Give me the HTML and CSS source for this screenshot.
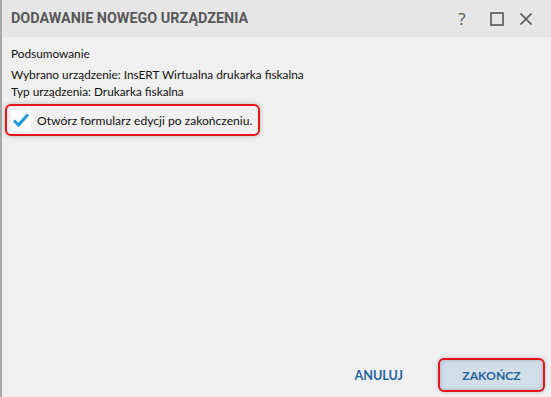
FILE: index.html
```html
<!DOCTYPE html>
<html lang="pl">
<head>
<meta charset="utf-8">
<link rel="stylesheet" href="styles.css">
</head>
<body>
<div class="window">
  <header class="titlebar">
    <h1 class="title">DODAWANIE NOWEGO URZĄDZENIA</h1>
    <div class="controls">
      <span class="ctrl help">?</span>
      <span class="ctrl max">
        <svg width="14" height="14" viewBox="0 0 14 14"><rect x="1" y="1" width="12" height="12" fill="none" stroke="#555" stroke-width="1.6"/></svg>
      </span>
      <span class="ctrl">
        <svg width="14" height="14" viewBox="0 0 14 14"><path d="M1.5 1.5 L12.5 12.5 M12.5 1.5 L1.5 12.5" stroke="#555" stroke-width="1.7" fill="none"/></svg>
      </span>
    </div>
  </header>
  <main class="content">
    <p class="line heading">Podsumowanie</p>
    <p class="line first">Wybrano urządzenie: InsERT Wirtualna drukarka fiskalna</p>
    <p class="line">Typ urządzenia: Drukarka fiskalna</p>
    <div class="check-row">
      <span class="checkbox">
        <svg width="18" height="16" viewBox="0 0 18 16"><path d="M2 8.5 L6.5 13 L16 2.5" fill="none" stroke="#1a9bd7" stroke-width="3"/></svg>
      </span>
      <span class="check-label">Otwórz formularz edycji po zakończeniu.</span>
    </div>
  </main>
  <footer class="footer">
    <button class="btn link">ANULUJ</button>
    <button class="btn primary">ZAKOŃCZ</button>
  </footer>
</div>
</body>
</html>
```
FILE: styles.css
```css
html, body {
  margin: 0;
  padding: 0;
}
body {
  width: 551px;
  height: 397px;
  overflow: hidden;
  background: #f0f0f0;
  font-family: "Lato", "Open Sans", sans-serif;
}
.window {
  width: 551px;
  height: 397px;
  display: flex;
  flex-direction: column;
  box-sizing: border-box;
  border-left: 2px solid #a8a8a8;
  background: #f0f0f0;
}
.titlebar {
  height: 37px;
  background: #e6e6e6;
  display: flex;
  align-items: center;
  justify-content: space-between;
  padding-left: 9px;
  flex: none;
}
.title {
  margin: 0;
  font-family: "Roboto", sans-serif;
  font-size: 14.4px;
  font-weight: 700;
  color: #585858;
}
.controls {
  display: flex;
  align-items: center;
  padding-right: 18px;
}
.ctrl {
  width: 14px;
  display: flex;
  justify-content: center;
  color: #555;
}
.ctrl svg { display: block; }
.max {
  margin: 0 15px 0 21px;
}
.help {
  font-family: "Open Sans", sans-serif;
  font-size: 17px;
  line-height: 14px;
}
.content {
  flex: 1;
  padding: 8px 0 0 9px;
}
.line {
  margin: 0;
  font-size: 11.8px;
  line-height: 17px;
  color: #111;
  white-space: nowrap;
}
.heading { margin-bottom: 4px; }
.check-row {
  margin-top: 4px;
  margin-left: -6px;
  width: 247px;
  height: 28px;
  border: 2px solid #e8141c;
  border-radius: 6px;
  display: flex;
  align-items: center;
  gap: 6px;
  padding-left: 4px;
  box-shadow: 0 0 5px rgba(0,0,0,0.25);
  white-space: nowrap;
}
.checkbox {
  width: 20px;
  height: 21px;
  background: #fff;
  display: flex;
  align-items: center;
  justify-content: center;
}
.check-label {
  font-size: 12.1px;
  color: #111;
}
.footer {
  flex: none;
  display: flex;
  justify-content: flex-end;
  align-items: center;
  gap: 35px;
  padding: 0 6px 4px 0;
  height: 36px;
}
.btn {
  font-family: "Lato", sans-serif;
  font-weight: 700;
  font-size: 12.6px;
  color: #1e64a0;
  background: none;
  border: none;
  padding: 0;
}
.primary {
  width: 107px;
  height: 34px;
  border: 2px solid #e8141c;
  border-radius: 6px;
  background: #d3dfe8;
  font-size: 12.2px;
  box-shadow: inset 0 0 4px rgba(120,150,170,0.6), 0 0 4px rgba(0,0,0,0.2);
}
```
